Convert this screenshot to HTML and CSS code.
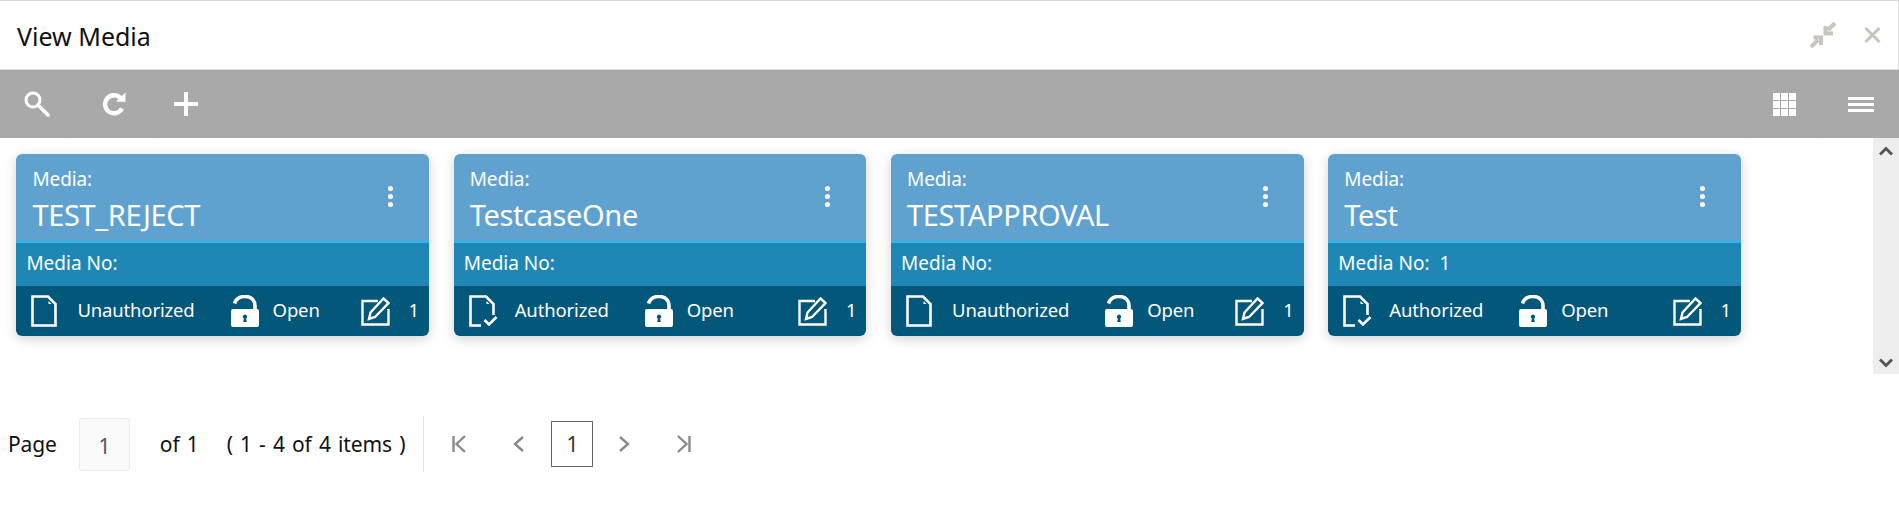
FILE: index.html
```html
<!DOCTYPE html>
<html lang="en">
<head>
<meta charset="utf-8">
<title>View Media</title>
<link rel="stylesheet" href="styles.css">
</head>
<body>
<svg class="defs" width="0" height="0" aria-hidden="true">
  <symbol id="doc" viewBox="0 0 26 32"><path d="M1.500 1.500H17L24.500 9V30.500H1.500Z" fill="none" stroke="#fff" stroke-width="2.600"/><path d="M17.500 6V9H20.500Z" fill="#fff"/></symbol>
  <symbol id="doc-check" viewBox="0 0 29 32"><path d="M12 30.500H1.500V1.500H17L24.500 9V20" fill="none" stroke="#fff" stroke-width="2.600"/><path d="M17.500 6V9H20.500Z" fill="#fff"/><path d="M15.500 25L20 29.500L27.500 22" fill="none" stroke="#fff" stroke-width="2.600"/></symbol>
  <symbol id="lock" viewBox="0 0 28 32"><path d="M3.500 8.500C5 3.500 9 1.500 14 1.500C20.500 1.500 24 5.500 24 11V15" fill="none" stroke="#fff" stroke-width="3.600"/><path fill-rule="evenodd" d="M2 14H26A2 2 0 0 1 28 16V30A2 2 0 0 1 26 32H2A2 2 0 0 1 0 30V16A2 2 0 0 1 2 14ZM14 19.500A2.200 2.200 0 0 0 12.900 23.600L12.200 27H15.800L15.100 23.600A2.200 2.200 0 0 0 14 19.500Z" fill="#fff"/></symbol>
  <symbol id="edit" viewBox="0 0 29 29"><path d="M17 4H1.500V27.500H27.500V12" fill="none" stroke="#fff" stroke-width="2.400"/><path d="M22.500 1.500L27.500 6L14 20L8 22L9.500 15.500Z" fill="none" stroke="#fff" stroke-width="2.400"/></symbol>
</svg>

<header class="title-bar">
  <h1 class="title">View Media</h1>
  <div class="window-actions">
    <svg class="ico-compress" width="28" height="27" viewBox="0 0 28 27"><path d="M26 1L19 8M16.500 4V11.500H24M2 25L9 18M12 23V15.500H4.500" fill="none" stroke="#c8c5bf" stroke-width="4"/></svg>
    <svg class="ico-close" width="17" height="16" viewBox="0 0 17 16"><path d="M1.500 1L15.500 15M15.500 1L1.500 15" fill="none" stroke="#c8c5bf" stroke-width="3"/></svg>
  </div>
</header>

<nav class="toolbar">
  <div class="tool-group">
    <button class="tool tool-search" aria-label="Search"><svg width="26" height="26" viewBox="0 0 26 26"><circle cx="9" cy="9" r="7" fill="none" stroke="#fff" stroke-width="3"/><path d="M14 14L24 24" stroke="#fff" stroke-width="3.600" stroke-linecap="round"/></svg></button>
    <button class="tool tool-refresh" aria-label="Refresh"><svg width="25" height="24" viewBox="0 0 25 24"><path d="M20 16.500A9 9 0 1 1 18.500 6" fill="none" stroke="#fff" stroke-width="4.400"/><path d="M14 9.500L23.500 10V0.500Z" fill="#fff"/></svg></button>
    <button class="tool tool-add" aria-label="Add"><svg width="24" height="24" viewBox="0 0 24 24"><path d="M12 0V24M0 12H24" stroke="#fff" stroke-width="4"/></svg></button>
  </div>
  <div class="tool-group">
    <button class="tool tool-grid" aria-label="Grid view"><svg width="23" height="23" viewBox="0 0 23 23"><path fill="#fff" d="M0 0h7v7H0zM8 0h7v7H8zM16 0h7v7h-7zM0 8h7v7H0zM8 8h7v7H8zM16 8h7v7h-7zM0 16h7v7H0zM8 16h7v7H8zM16 16h7v7h-7z"/></svg></button>
    <button class="tool tool-list" aria-label="List view"><svg width="26" height="15" viewBox="0 0 26 15"><path fill="#fff" d="M0 0h26v3H0zM0 6h26v3H0zM0 12h26v3H0z"/></svg></button>
  </div>
</nav>

<main class="content">
  <section class="cards">
    <article class="card">
      <div class="card-top">
        <div><div class="label">Media:</div><div class="name">TEST_REJECT</div></div>
        <div class="kebab"><i></i><i></i><i></i></div>
      </div>
      <div class="card-mid"><span>Media No:</span></div>
      <div class="card-bottom">
        <div class="item status"><svg class="i-doc" width="26" height="32"><use href="#doc"/></svg><span>Unauthorized</span></div>
        <div class="item open"><svg class="i-lock" width="28" height="32"><use href="#lock"/></svg><span>Open</span></div>
        <div class="item count"><svg class="i-edit" width="29" height="29"><use href="#edit"/></svg><span>1</span></div>
      </div>
    </article>
    <article class="card">
      <div class="card-top">
        <div><div class="label">Media:</div><div class="name">TestcaseOne</div></div>
        <div class="kebab"><i></i><i></i><i></i></div>
      </div>
      <div class="card-mid"><span>Media No:</span></div>
      <div class="card-bottom">
        <div class="item status"><svg class="i-doc" width="29" height="32"><use href="#doc-check"/></svg><span>Authorized</span></div>
        <div class="item open"><svg class="i-lock" width="28" height="32"><use href="#lock"/></svg><span>Open</span></div>
        <div class="item count"><svg class="i-edit" width="29" height="29"><use href="#edit"/></svg><span>1</span></div>
      </div>
    </article>
    <article class="card">
      <div class="card-top">
        <div><div class="label">Media:</div><div class="name">TESTAPPROVAL</div></div>
        <div class="kebab"><i></i><i></i><i></i></div>
      </div>
      <div class="card-mid"><span>Media No:</span></div>
      <div class="card-bottom">
        <div class="item status"><svg class="i-doc" width="26" height="32"><use href="#doc"/></svg><span>Unauthorized</span></div>
        <div class="item open"><svg class="i-lock" width="28" height="32"><use href="#lock"/></svg><span>Open</span></div>
        <div class="item count"><svg class="i-edit" width="29" height="29"><use href="#edit"/></svg><span>1</span></div>
      </div>
    </article>
    <article class="card">
      <div class="card-top">
        <div><div class="label">Media:</div><div class="name">Test</div></div>
        <div class="kebab"><i></i><i></i><i></i></div>
      </div>
      <div class="card-mid"><span>Media No:</span><span class="no-val">1</span></div>
      <div class="card-bottom">
        <div class="item status"><svg class="i-doc" width="29" height="32"><use href="#doc-check"/></svg><span>Authorized</span></div>
        <div class="item open"><svg class="i-lock" width="28" height="32"><use href="#lock"/></svg><span>Open</span></div>
        <div class="item count"><svg class="i-edit" width="29" height="29"><use href="#edit"/></svg><span>1</span></div>
      </div>
    </article>
  </section>
  <aside class="scrollbar">
    <svg width="14" height="10" viewBox="0 0 14 10"><path d="M1 8.500L7 2.500L13 8.500" fill="none" stroke="#555" stroke-width="3"/></svg>
    <svg width="14" height="10" viewBox="0 0 14 10"><path d="M1 1.500L7 7.500L13 1.500" fill="none" stroke="#555" stroke-width="3"/></svg>
  </aside>
</main>

<footer class="pager">
  <span class="pg-label">Page</span>
  <span class="pg-input">1</span>
  <span class="pg-of">of 1</span>
  <span class="pg-range">( 1 - 4 of 4 items )</span>
  <span class="pg-sep"></span>
  <svg class="pg-first" width="14" height="18" viewBox="0 0 14 18"><path d="M1.500 1V17M13 1L4.500 9L13 17" fill="none" stroke="#8a8a8a" stroke-width="2.400"/></svg>
  <svg class="pg-prev" width="11" height="16" viewBox="0 0 11 16"><path d="M10 1L2 8L10 15" fill="none" stroke="#8a8a8a" stroke-width="2.400"/></svg>
  <span class="pg-current">1</span>
  <svg class="pg-next" width="11" height="16" viewBox="0 0 11 16"><path d="M1 1L9 8L1 15" fill="none" stroke="#8a8a8a" stroke-width="2.400"/></svg>
  <svg class="pg-last" width="14" height="18" viewBox="0 0 14 18"><path d="M12.500 1V17M1 1L9.500 9L1 17" fill="none" stroke="#8a8a8a" stroke-width="2.400"/></svg>
</footer>
</body>
</html>
```

FILE: styles.css
```css
* { box-sizing: border-box; }
html, body { margin: 0; height: 100%; background: #fff; }
body { font-family: "Noto Sans", "Open Sans", sans-serif; color: #111; overflow: hidden; }
.defs { position: absolute; }

.title-bar {
  height: 70px;
  border-top: 1px solid #d6d6d6;
  border-right: 1px solid #e0e0e0;
  border-bottom: 1px solid #dcdcdc;
  display: flex;
  align-items: center;
  justify-content: space-between;
  padding: 0 17px 0 17px;
}
.title { margin: 0; padding-top: 2px; font-size: 25px; font-weight: 400; }
.window-actions { display: flex; align-items: center; gap: 27px; }

.toolbar {
  height: 68px;
  background: #a9a9a9;
  display: flex;
  justify-content: space-between;
}
.tool-group { display: flex; }
.tool { background: none; border: 0; padding: 0; margin: 0; display: flex; align-items: center; justify-content: center; height: 68px; }
.tool-search { width: 70px; padding-left: 5px; border-right: 1px solid #a7a7a7; }
.tool-refresh { width: 70px; margin-left: 13px; padding-right: 6px; border-right: 1px solid #a7a7a7; }
.tool-add { width: 66px; }
.tool-grid { width: 75px; border-left: 1px solid #a7a7a7; border-right: 1px solid #a7a7a7; }
.tool-list { width: 77px; }

.content { height: 236px; display: flex; justify-content: space-between; }
.cards {
  flex: 1;
  display: flex;
  gap: 24.67px;
  padding: 16px 0 0 16.4px;
  align-items: flex-start;
}
.card {
  width: 412.67px;
  height: 182px;
  border-radius: 6px;
  overflow: hidden;
  color: #fff;
  box-shadow: 0 3px 12px rgba(0, 0, 0, .18);
  display: flex;
  flex-direction: column;
}
.card-top {
  height: 89px;
  background: #5fa2d0;
  border-bottom: 2px solid #2bb8ea;
  padding: 13px 0 0 16px;
  display: flex;
  justify-content: space-between;
}
.label { font-size: 19px; line-height: 24px; letter-spacing: -0.1px; }
.name { font-size: 29px; line-height: 38px; margin-top: 5px; letter-spacing: -0.36px; }
.kebab { width: 5px; margin: 19px 36px 0 0; display: flex; flex-direction: column; gap: 3px; }
.kebab i { display: block; width: 5px; height: 5px; border-radius: 50%; background: #fff; }

.card-mid {
  height: 43px;
  background: #1e87b6;
  padding: 0 0 3px 10px;
  display: flex;
  align-items: center;
  font-size: 19px;
}
.no-val { margin-left: 10px; }

.card-bottom {
  flex: 1;
  background: #02577b;
  display: flex;
  align-items: center;
  padding: 0 10px 0 15px;
  font-size: 18.5px;
  letter-spacing: -0.15px;
}
.item { display: flex; align-items: center; }
.item svg { display: block; flex: none; }
.status span, .open span, .count span { padding-bottom: 3px; }
.status span { margin-left: 20px; }
.status .i-doc[width="29"] + span { margin-left: 17px; }
.open { margin-left: 36px; }
.open span { margin-left: 14px; }
.count { margin-left: auto; }
.count span { margin-left: 19px; }

.scrollbar {
  width: 26px;
  background: #eeeeee;
  display: flex;
  flex-direction: column;
  align-items: center;
  justify-content: space-between;
  padding: 8px 0 6px;
}
.scrollbar svg { display: block; }

.pager {
  display: flex;
  align-items: center;
  padding: 42px 0 0 8px;
  font-size: 21px;
  letter-spacing: -0.1px;
  word-spacing: 1.8px;
}
.pg-input {
  width: 51px;
  height: 53px;
  margin-left: 22px;
  background: #fafafa;
  border: 1px solid #ececec;
  border-radius: 3px;
  display: flex;
  align-items: center;
  justify-content: center;
  color: #555;
  padding-top: 4px;
}
.pg-of { margin-left: 30px; }
.pg-range { margin-left: 28px; }
.pg-sep { width: 1px; height: 56px; background: #e2e2e2; margin-left: 18px; }
.pg-first { margin-left: 28px; }
.pg-prev { margin-left: 47px; }
.pg-current {
  width: 42px;
  height: 46px;
  margin-left: 27px;
  border: 1px solid #666;
  display: flex;
  align-items: center;
  justify-content: center;
  color: #333;
}
.pg-next { margin-left: 26px; }
.pg-last { margin-left: 47px; }
```
